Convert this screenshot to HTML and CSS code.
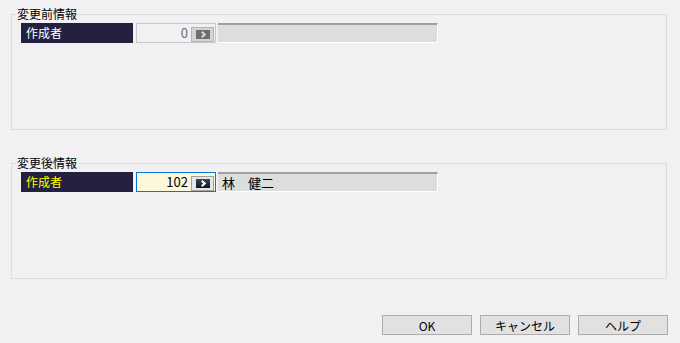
FILE: index.html
```html
<!DOCTYPE html>
<html lang="ja">
<head>
    <meta charset="UTF-8">
    <title>作成者変更</title>
    <link rel="stylesheet" href="styles.css">
</head>
<body>
    <fieldset class="group">
        <legend>変更前情報</legend>
        <div class="row">
            <div class="label">作成者</div>
            <div class="code disabled">
                <span class="value">0</span>
                <span class="pick"><span class="chev"></span></span>
            </div>
            <div class="name"></div>
        </div>
    </fieldset>

    <fieldset class="group after">
        <legend>変更後情報</legend>
        <div class="row">
            <div class="label active">作成者</div>
            <div class="code focused">
                <span class="value">102</span>
                <span class="pick"><span class="chev"></span></span>
            </div>
            <div class="name">林　健二</div>
        </div>
    </fieldset>

    <div class="buttons">
        <button>OK</button>
        <button>キャンセル</button>
        <button>ヘルプ</button>
    </div>
</body>
</html>
```

FILE: styles.css
```css
body{
    margin: 0;
    width: 680px;
    height: 343px;
    background-color: #f2f0f3;
    font-family: "Noto Sans CJK JP", "Noto Sans", sans-serif;
    font-size: 12px;
    color: #000;
    overflow: hidden;
}

.group{
    margin: 7px 13px 0 11px;
    padding: 2px 9px 0 9px;
    border: 1px solid #dcdcdc;
    box-sizing: border-box;
    height: 123px;
}
.group.after{
    margin-top: 26px;
}

legend{
    padding: 0 1px;
    margin-left: -5px;
    line-height: 14px;
    font-size: 12px;
}

.row{
    display: flex;
    height: 20px;
}

.label{
    width: 112px;
    background-color: #23213f;
    color: #fff;
    padding-left: 5px;
    line-height: 20px;
    box-sizing: border-box;
}
.label.active{
    color: #ffff00;
}

.code{
    margin-left: 3px;
    width: 80px;
    box-sizing: border-box;
    border: 1px solid #c8c8c8;
    display: flex;
    align-items: center;
    padding-right: 1px;
}
.code.focused{
    border-color: #0078d7;
    background-color: #fcf8dc;
}
.value{
    flex: 1;
    text-align: right;
    padding-right: 3px;
    font-size: 13px;
    line-height: 18px;
}
.disabled .value{
    color: #6d6d6d;
}

.pick{
    width: 23px;
    height: 15px;
    box-sizing: border-box;
    border: 1px solid #b4b4b4;
    background-color: #d4d4d4;
    display: flex;
    align-items: center;
    justify-content: center;
    margin-top: 3px;
}
.focused .pick{
    background-color: #e6e6e6;
    border-color: #a0a0a0;
}
.chev{
    width: 14px;
    height: 9px;
    background-color: #6e6e6e;
    position: relative;
}
.focused .chev{
    background: linear-gradient(#3a4658, #101722);
}
.chev::after{
    content: "";
    position: absolute;
    left: 4px;
    top: 2px;
    width: 3px;
    height: 3px;
    border-right: 2px solid #d8d8d8;
    border-bottom: 2px solid #d8d8d8;
    transform: rotate(-45deg);
}
.focused .chev::after{
    border-color: #fff;
}

.name{
    margin-left: 2px;
    width: 220px;
    box-sizing: border-box;
    background-color: #dcdedb;
    border-top: 2px solid #a0a0a0;
    border-right: 1px solid #fff;
    border-bottom: 1px solid #fff;
    padding-left: 4px;
    line-height: 17px;
    font-size: 13px;
    height: 20px;
}

.buttons{
    display: flex;
    justify-content: flex-end;
    gap: 8px;
    margin: 36px 12px 0 0;
}
button{
    width: 90px;
    height: 20px;
    background-color: #e1e1e1;
    border: 1px solid #adadad;
    font-family: "Noto Sans CJK JP", sans-serif;
    font-size: 12px;
    padding: 0;
    color: #000;
}
```
